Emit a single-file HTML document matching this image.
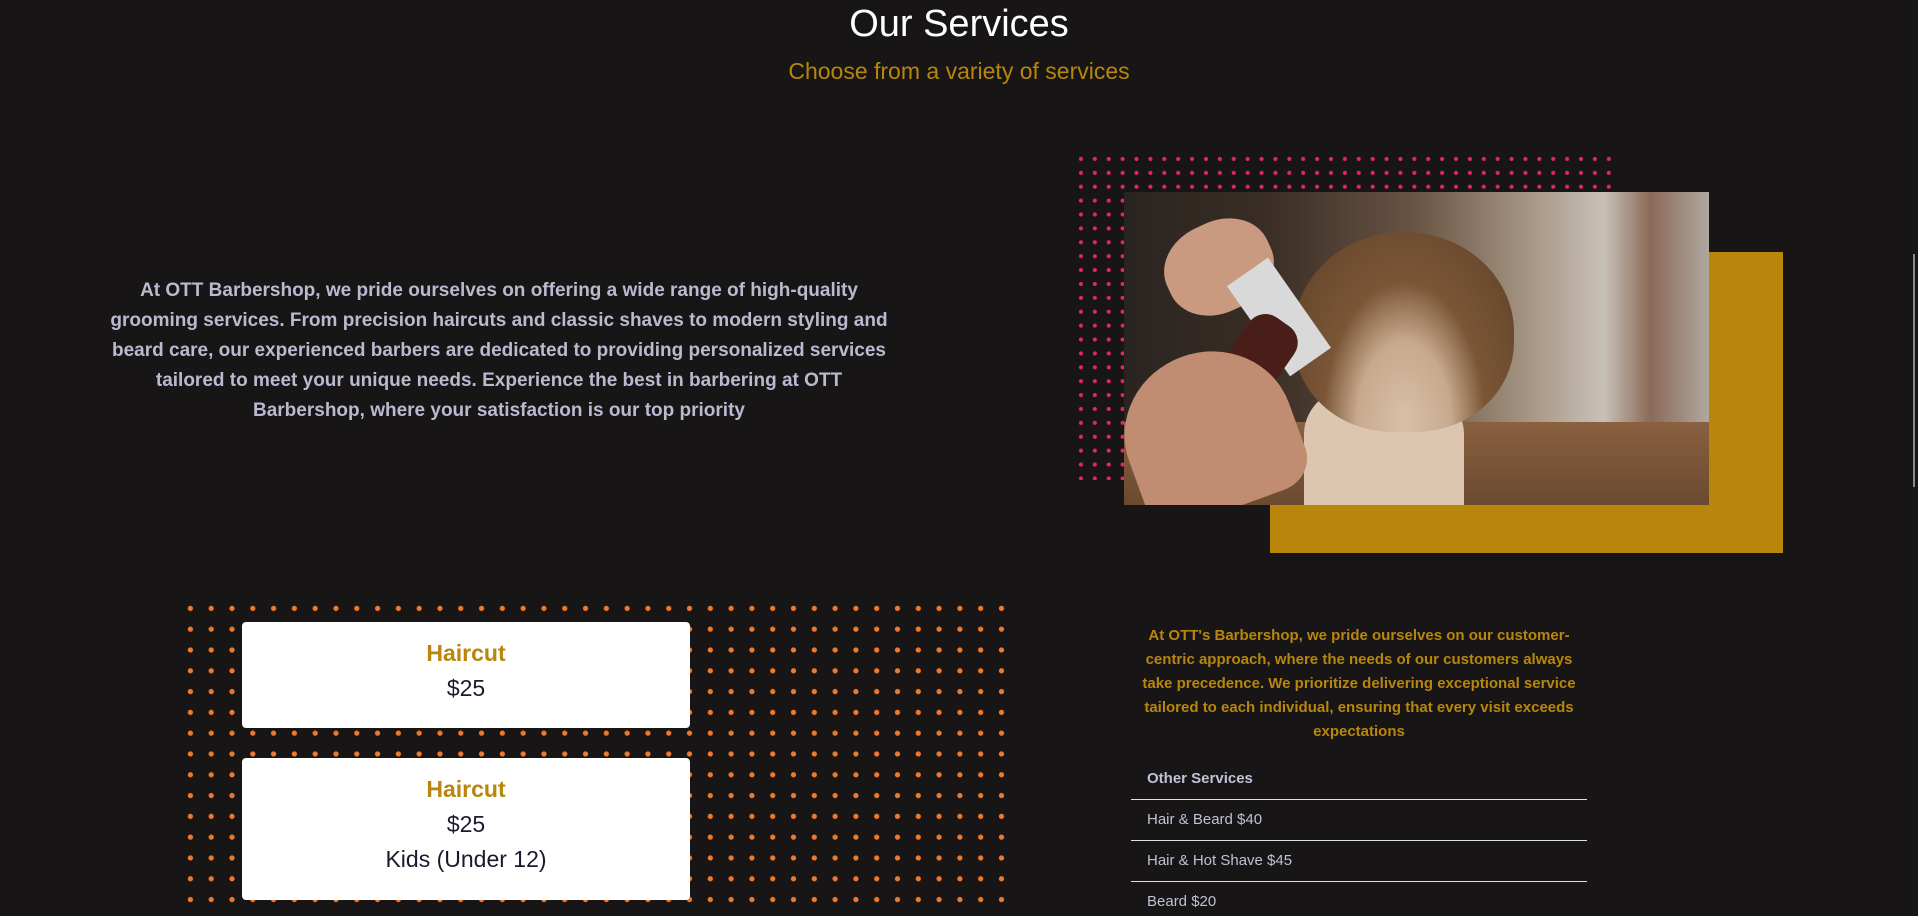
<!DOCTYPE html>
<html><head><meta charset="utf-8"><style>
*{margin:0;padding:0;box-sizing:border-box}
body{width:1918px;height:916px;background:#171515;overflow:hidden;position:relative;font-family:"Liberation Sans",sans-serif}
.abs{position:absolute}
h1{position:absolute;top:1px;left:0;width:1918px;text-align:center;color:#fff;font-weight:400;font-size:38px;line-height:46px}
.sub{position:absolute;top:58px;left:0;width:1918px;text-align:center;color:#b8860b;font-size:23px}
.p1{position:absolute;left:99px;top:276px;width:800px;text-align:center;color:#b9b9d0;font-size:19px;font-weight:600;line-height:30px}
.pink{left:1074px;top:152px;width:546px;height:328px;background-image:radial-gradient(circle,#e8265c 1.8px,transparent 2.3px);background-size:13.9px 13.9px}
.orange{left:180px;top:598px;width:830px;height:318px;background-image:radial-gradient(circle,#f07a2a 2.3px,transparent 2.9px);background-size:20.8px 20.8px}
.card{position:absolute;left:242px;width:448px;background:#fff;border-radius:4px;text-align:center}
.card .t{color:#b8860b;font-weight:700;font-size:23px}
.card .v{color:#1a1a2e;font-size:23px}
.p2{position:absolute;left:1134px;top:624px;width:450px;text-align:center;color:#b8860b;font-size:15px;font-weight:600;line-height:24px}
.row{position:absolute;left:1131px;width:456px;color:#c0c0d8;font-size:15px;padding-left:16px}
.ln{position:absolute;left:1131px;width:456px;height:1px;background:#e0e0e0}
</style></head><body>
<h1>Our Services</h1>
<div class="sub">Choose from a variety of services</div>
<div class="p1">At OTT Barbershop, we pride ourselves on offering a wide range of high-quality grooming services. From precision haircuts and classic shaves to modern styling and beard care, our experienced barbers are dedicated to providing personalized services tailored to meet your unique needs. Experience the best in barbering at OTT Barbershop, where your satisfaction is our top priority</div>

<div class="abs pink"></div>
<div class="abs" style="left:1270px;top:252px;width:513px;height:301px;background:#b8860b"></div>
<div class="abs" style="left:1124px;top:192px;width:585px;height:313px;overflow:hidden;background:linear-gradient(90deg,#2a2420 0%,#3a2e26 25%,#6a5444 50%,#a99886 70%,#c8c1b8 82%,#8a6a58 90%,#b0a8a0 100%)">
  <div class="abs" style="left:0;top:230px;width:585px;height:83px;background:linear-gradient(180deg,#8a6040,#6a4a30)"></div>
  <div class="abs" style="left:180px;top:190px;width:160px;height:130px;background:#dcc6b0;border-radius:40% 40% 0 0"></div>
  <div class="abs" style="left:170px;top:40px;width:220px;height:200px;background:radial-gradient(ellipse at 50% 95%,#d8c0a8 0%,#c7a98e 30%,#7a5636 52%,#5e4028 100%);border-radius:50% 50% 45% 45%"></div>
  <div class="abs" style="left:40px;top:30px;width:110px;height:90px;background:#c99a80;border-radius:45%;transform:rotate(-25deg)"></div>
  <div class="abs" style="left:130px;top:70px;width:50px;height:110px;background:#d9d9d9;transform:rotate(-35deg)"></div>
  <div class="abs" style="left:100px;top:120px;width:55px;height:110px;background:#4a1e18;border-radius:20px;transform:rotate(35deg)"></div>
  <div class="abs" style="left:0;top:160px;width:170px;height:160px;background:#c08c72;border-radius:50% 50% 20% 20%;transform:rotate(-20deg)"></div>
</div>

<div class="abs orange"></div>
<div class="card" style="top:622px;height:106px"><div class="t" style="margin-top:18px">Haircut</div><div class="v" style="margin-top:8px">$25</div></div>
<div class="card" style="top:758px;height:142px"><div class="t" style="margin-top:18px">Haircut</div><div class="v" style="margin-top:8px">$25</div><div class="v" style="margin-top:8px">Kids (Under 12)</div></div>

<div class="p2">At OTT's Barbershop, we pride ourselves on our customer-centric approach, where the needs of our customers always take precedence. We prioritize delivering exceptional service tailored to each individual, ensuring that every visit exceeds expectations</div>
<div class="row" style="top:770px;font-weight:700">Other Services</div>
<div class="ln" style="top:799px"></div>
<div class="row" style="top:811px">Hair &amp; Beard $40</div>
<div class="ln" style="top:840px"></div>
<div class="row" style="top:852px">Hair &amp; Hot Shave $45</div>
<div class="ln" style="top:881px"></div>
<div class="row" style="top:893px">Beard $20</div>

<div class="abs" style="left:1913px;top:254px;width:2px;height:233px;background:#888"></div>
</body></html>
